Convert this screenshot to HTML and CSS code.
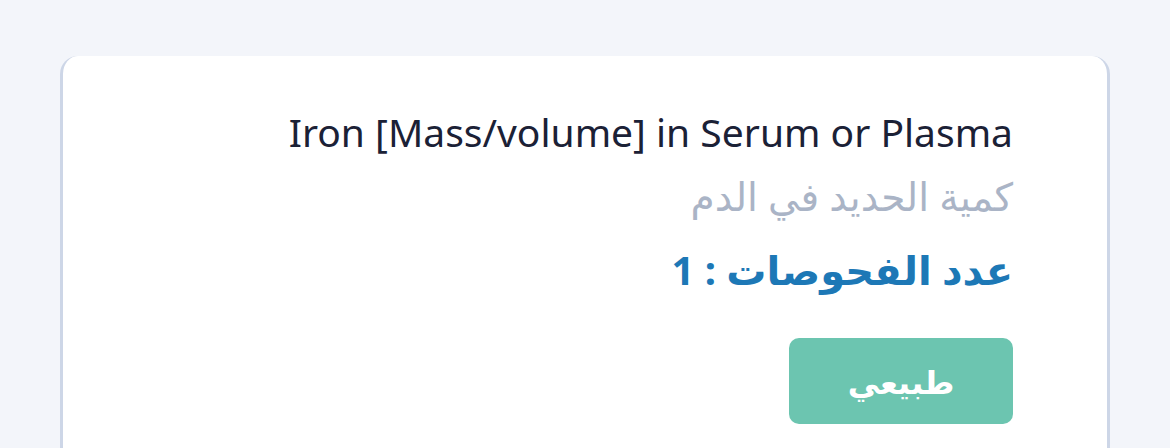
FILE: index.html
```html
<!DOCTYPE html>
<html lang="ar">
<head>
<meta charset="utf-8">
<link rel="stylesheet" href="styles.css">
</head>
<body>
<main class="page">
  <section class="card">
    <h2 class="title">Iron [Mass/volume] in Serum or Plasma</h2>
    <p class="subtitle" dir="rtl">كمية الحديد في الدم</p>
    <p class="count" dir="rtl">عدد الفحوصات : 1</p>
    <div class="actions">
      <span class="status" dir="rtl">طبيعي</span>
    </div>
  </section>
</main>
</body>
</html>
```

FILE: styles.css
```css
html, body {
  margin: 0;
  padding: 0;
}
body {
  background: #f3f5fa;
  font-family: "Noto Sans", "DejaVu Sans", sans-serif;
  width: 1170px;
  height: 448px;
  overflow: hidden;
}
.page {
  padding: 56px 60px 0 60px;
}
.card {
  box-sizing: border-box;
  background: #ffffff;
  border-left: 3px solid #cdd6e7;
  border-right: 3px solid #cdd6e7;
  border-radius: 18px 18px 0 0;
  padding: 52px 94px 0 94px;
  height: 392px;
  display: flex;
  flex-direction: column;
  align-items: flex-end;
}
.title {
  margin: 0;
  font-weight: 400;
  font-size: 39px;
  line-height: 48px;
  color: #1b2136;
}
.subtitle {
  margin: 14px 0 0 0;
  font-size: 39px;
  line-height: 52px;
  color: #aab4c6;
}
.count {
  margin: 22px 0 0 0;
  font-size: 40px;
  font-weight: 700;
  line-height: 52px;
  color: #1d78b6;
}
.actions {
  margin-top: 42px;
}
.status {
  display: flex;
  align-items: center;
  justify-content: center;
  width: 224px;
  height: 86px;
  border-radius: 10px;
  background: #6cc5b0;
  color: #ffffff;
  font-size: 32px;
  font-weight: 700;
}
```
